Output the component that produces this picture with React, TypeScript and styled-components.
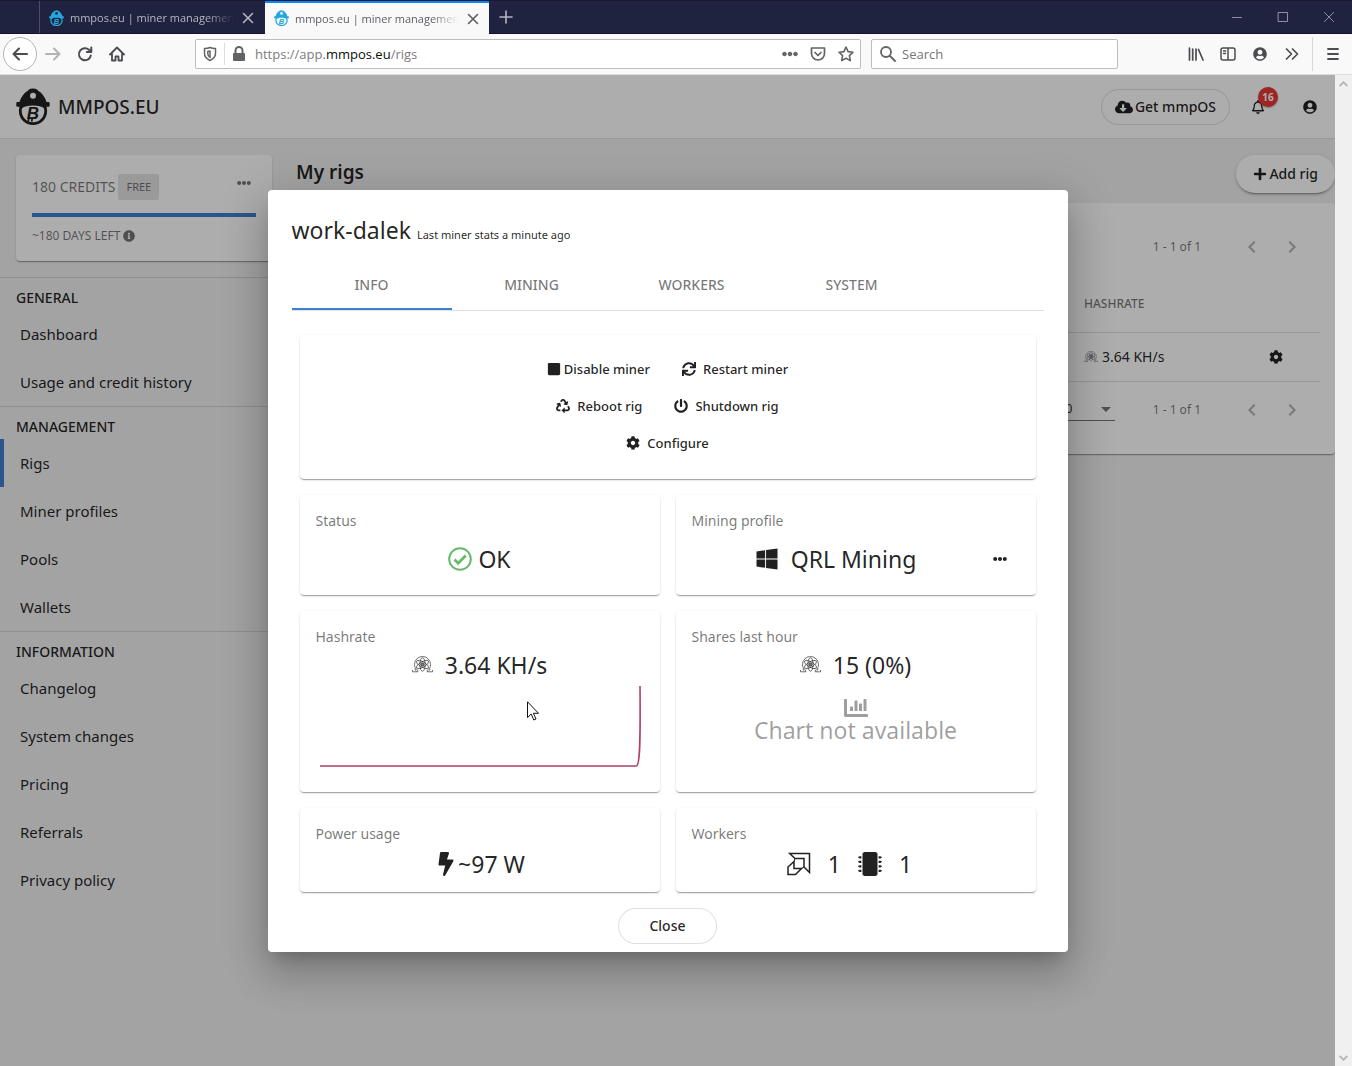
import React from 'react';
import styled, { createGlobalStyle } from 'styled-components';
import {
  FaBolt,
  FaChartBar,
  FaCloudDownloadAlt,
  FaCog,
  FaEllipsisH,
  FaInfoCircle,
  FaMicrochip,
  FaPlus,
  FaPowerOff,
  FaRecycle,
  FaRegBell,
  FaStop,
  FaSync,
  FaUserCircle,
  FaWindows,
} from 'react-icons/fa';

const ink = 'rgba(0, 0, 0, 0.87)';
const muted = 'rgba(0, 0, 0, 0.54)';
const line = 'rgba(0, 0, 0, 0.12)';
const blue = '#3f7fd0';
const raised =
  '0 2px 1px -1px rgba(0,0,0,.2), 0 1px 1px 0 rgba(0,0,0,.14), 0 1px 3px 0 rgba(0,0,0,.12)';

const GlobalStyle = createGlobalStyle`
  *, *::before, *::after { box-sizing: border-box; }
  html, body, #root { height: 100%; }
  body { margin: 0; overflow: hidden; font-family: "Noto Sans", "Open Sans", sans-serif; color: ${ink}; }
  button, input, select { font: inherit; color: inherit; }
  button { border: 0; padding: 0; background: none; cursor: pointer; }
  h1, h2, h3, p, ul { margin: 0; padding: 0; }
  ul { list-style: none; }
  a { color: inherit; text-decoration: none; }
  svg { display: block; flex: none; }
`;

/* ---------- browser window ---------- */

const Window = styled.div`
  display: flex;
  flex-direction: column;
  height: 100vh;
`;

const TabStrip = styled.div`
  display: flex;
  height: 34px;
  flex: none;
  background: #202340;
  border-top: 1px solid #17192e;
  border-bottom: 1px solid #17122c;
  font: 11px/18px "Open Sans", sans-serif;
  color: #b4b5c4;
`;

const TabStub = styled.div`
  width: 40px;
  border-right: 1px solid #4c4e65;
`;

const BrowserTab = styled.div<{ $active?: boolean }>`
  display: flex;
  align-items: center;
  gap: 6px;
  width: ${(p) => (p.$active ? 224 : 225)}px;
  padding: 0 9px;
  margin-bottom: ${(p) => (p.$active ? -1 : 0)}px;
  border-top: 2px solid ${(p) => (p.$active ? '#0a84ff' : 'transparent')};
  background: ${(p) => (p.$active ? '#f9f9fa' : 'transparent')};
  color: ${(p) => (p.$active ? '#5d5d62' : '#b4b5c4')};
`;

const TabTitle = styled.span`
  flex: 1;
  white-space: nowrap;
  mask-image: linear-gradient(to right, #000 calc(100% - 28px), transparent);
`;

const StripButton = styled.button`
  display: grid;
  place-items: center;
  width: 34px;
`;

const WindowButtons = styled.div`
  display: flex;
  margin-left: auto;
`;

const WindowButton = styled.button`
  display: grid;
  place-items: center;
  width: 46px;
  color: #8f90a3;
`;

const Toolbar = styled.div`
  display: flex;
  align-items: center;
  flex: none;
  height: 41px;
  padding-left: 3px;
  background: #f9f9fa;
  border-bottom: 1px solid #ddd;
  color: #4c4c50;
`;

const ToolButton = styled.button<{ $dim?: boolean }>`
  display: grid;
  place-items: center;
  width: 32px;
  height: 32px;
  color: #4c4c50;
  opacity: ${(p) => (p.$dim ? 0.4 : 1)};
`;

const BackButton = styled(ToolButton)`
  width: 34px;
  height: 34px;
  border: 1px solid #b5b5b8;
  border-radius: 50%;
  background: #fff;
`;

const Field = styled.div<{ $grow?: boolean }>`
  display: flex;
  align-items: center;
  height: 30px;
  ${(p) => (p.$grow ? 'flex: 1;' : 'width: 247px;')}
  border: 1px solid #bcbcbe;
  border-radius: 2px;
  background: #fff;
  color: #636367;
  font: 13px/20px "Open Sans", sans-serif;
`;

const AddressField = styled(Field)`
  margin: 0 10px 0 62px;
  padding: 0 0 0 6px;
`;

const SearchField = styled(Field)`
  padding: 0 8px;
  gap: 6px;
  margin-right: 62px;
`;

const FieldRule = styled.span`
  width: 1px;
  height: 22px;
  margin: 0 6px;
  background: #ddd;
`;

const Address = styled.a`
  flex: 1;
  margin-left: 8px;
  color: #7c7c80;
  b { font-weight: 400; color: #0c0c0d; }
`;

const FieldButton = styled(ToolButton)`
  width: 28px;
  height: 28px;
  color: #636367;
`;

const SearchInput = styled.input`
  flex: 1;
  min-width: 0;
  border: 0;
  outline: 0;
  padding: 0;
  background: none;
  &::placeholder { color: #757579; opacity: 1; }
`;

const ToolRule = styled.span`
  width: 1px;
  height: 34px;
  margin-left: 4px;
  background: #d8d8da;
`;

const MenuButton = styled(ToolButton)`
  width: 39px;
`;

const Viewport = styled.div`
  display: flex;
  flex: 1;
  min-height: 0;
`;

const ScrollTrack = styled.div`
  display: flex;
  flex-direction: column;
  justify-content: space-between;
  align-items: center;
  width: 17px;
  padding: 6px 0 5px;
  background: #f0f0f0;
`;

/* ---------- application page ---------- */

const Page = styled.div`
  position: relative;
  display: flex;
  flex-direction: column;
  flex: 1;
  min-width: 0;
  overflow: hidden;
  background: #f1f1f1;
`;

const Header = styled.header`
  display: flex;
  align-items: center;
  gap: 4px;
  height: 64px;
  flex: none;
  padding: 0 1px 0 16px;
  background: #fff;
  border-bottom: 1px solid #e0e0e0;
`;

const Brand = styled.a`
  display: flex;
  align-items: center;
  gap: 8px;
  margin-right: auto;
  font-size: 19px;
  line-height: 28px;
  font-weight: 500;
`;

const Pill = styled.button<{ $raised?: boolean; $pad?: number }>`
  display: flex;
  align-items: center;
  justify-content: center;
  gap: 2px;
  height: ${(p) => (p.$raised ? 38 : 36)}px;
  padding: 0 ${(p) => p.$pad ?? 13}px;
  border: ${(p) => (p.$raised ? '0' : `1px solid ${line}`)};
  border-radius: 19px;
  background: #fff;
  box-shadow: ${(p) =>
    p.$raised
      ? '0 3px 1px -2px rgba(0,0,0,.2), 0 2px 2px 0 rgba(0,0,0,.14), 0 1px 5px 0 rgba(0,0,0,.12)'
      : 'none'};
  font-size: 14px;
  line-height: 20px;
  font-weight: 500;
  white-space: nowrap;
`;

const RoundButton = styled.button<{ $size?: number }>`
  position: relative;
  display: grid;
  place-items: center;
  width: ${(p) => p.$size ?? 40}px;
  height: ${(p) => p.$size ?? 40}px;
`;

const Badge = styled.span`
  position: absolute;
  top: 4px;
  right: 4px;
  width: 20px;
  height: 20px;
  border-radius: 50%;
  background: #e53935;
  box-shadow: 0 1px 2px rgba(0, 0, 0, 0.3);
  color: #fff;
  font-size: 10px;
  line-height: 20px;
  font-weight: 700;
  text-align: center;
`;

const Body = styled.div`
  display: flex;
  flex: 1;
  min-height: 0;
`;

const Sidebar = styled.aside`
  width: 280px;
  flex: none;
  padding-top: 16px;
`;

const CreditCard = styled.section`
  margin: 0 8px 16px 16px;
  padding: 16px;
  border-radius: 4px;
  background: #fff;
  box-shadow: ${raised};
  color: ${muted};
`;

const CreditRow = styled.div`
  display: flex;
  align-items: center;
  gap: 3px;
  height: 32px;
  margin-bottom: 10px;
  font-size: 14px;
  line-height: 20px;
`;

const CreditMenu = styled(RoundButton)`
  align-self: flex-start;
`;

const Plan = styled.span`
  margin-right: auto;
  padding: 4px 8px;
  border-radius: 2px;
  background: #e4e4e4;
  font-size: 11px;
  line-height: 18px;
`;

const CreditBar = styled.progress`
  display: block;
  width: 100%;
  height: 4px;
  margin-bottom: 10px;
  appearance: none;
  border: 0;
  &::-webkit-progress-bar { background: #d5e2f4; }
  &::-webkit-progress-value { background: ${blue}; }
`;

const CreditNote = styled.p`
  display: flex;
  align-items: center;
  gap: 3px;
  font-size: 12px;
  line-height: 18px;
`;

const NavGroup = styled.nav`
  border-top: 1px solid ${line};
`;

const NavHeading = styled.h3`
  height: 32px;
  padding: 10px 16px 0;
  font-size: 14px;
  line-height: 20px;
  font-weight: 500;
`;

const NavLink = styled.a<{ $active?: boolean }>`
  display: block;
  padding: 12px 16px;
  border-left: 4px solid ${(p) => (p.$active ? blue : 'transparent')};
  font-size: 15px;
  line-height: 24px;
`;

const Main = styled.main`
  flex: 1;
  min-width: 0;
  padding: 16px 0 0 16px;
`;

const MainHead = styled.div`
  display: flex;
  align-items: center;
  justify-content: space-between;
  margin-bottom: 10px;
`;

const MainTitle = styled.h1`
  font-size: 19px;
  line-height: 28px;
  font-weight: 600;
  padding-bottom: 4px;
`;

const RigsCard = styled.section`
  padding: 16px 15px 16px 16px;
  border-radius: 4px;
  background: #fff;
  box-shadow: ${raised};
`;

const Paginator = styled.div`
  display: flex;
  align-items: center;
  justify-content: flex-end;
  height: 56px;
  padding-right: 8px;
  color: ${muted};
  font-size: 12px;
  line-height: 18px;
`;

const PageRange = styled.span`
  margin: 0 31px 0 38px;
`;

const SizeBox = styled.label`
  display: flex;
  align-items: center;
  width: 56px;
  height: 22px;
  border-bottom: 1px solid ${muted};
  color: ${ink};
  svg { margin-right: 4px; color: ${muted}; }
`;

const SizeSelect = styled.select`
  flex: 1;
  min-width: 0;
  appearance: none;
  border: 0;
  padding: 0;
  background: none;
`;

const RigTable = styled.table`
  width: 100%;
  border-collapse: collapse;
  table-layout: fixed;
  font-size: 14px;
  th {
    height: 57px;
    padding: 0;
    border-bottom: 1px solid ${line};
    color: ${muted};
    font-size: 12px;
    font-weight: 500;
    text-align: left;
  }
  td { height: 49px; padding: 0; border-bottom: 1px solid ${line}; }
  th:nth-child(2) { width: 156px; }
  th:nth-child(3) { width: 80px; }
`;

const CellRow = styled.span`
  display: flex;
  align-items: center;
  gap: 4px;
`;

const CellEnd = styled.span`
  display: flex;
  justify-content: flex-end;
  padding-right: 24px;
`;

/* ---------- dialog ---------- */

const Backdrop = styled.div`
  position: absolute;
  inset: 0;
  display: grid;
  place-items: center;
  background: rgba(0, 0, 0, 0.32);
`;

const Dialog = styled.div`
  display: flex;
  flex-direction: column;
  width: 800px;
  max-width: 92%;
  padding: 24px 24px 8px;
  border-radius: 4px;
  background: #fff;
  box-shadow: 0 11px 15px -7px rgba(0, 0, 0, 0.2), 0 24px 38px 3px rgba(0, 0, 0, 0.14),
    0 9px 46px 8px rgba(0, 0, 0, 0.12);
`;

const DialogTitle = styled.h2`
  display: flex;
  align-items: baseline;
  gap: 6px;
  margin-bottom: 11px;
  font-size: 23px;
  line-height: 32px;
  font-weight: 400;
  small { font-size: 11px; }
`;

const Tabs = styled.div`
  display: flex;
  border-bottom: 1px solid ${line};
`;

const Tab = styled.button<{ $active?: boolean }>`
  width: 160px;
  height: 48px;
  border-bottom: 2px solid ${(p) => (p.$active ? blue : 'transparent')};
  color: ${muted};
  font-size: 14px;
  line-height: 20px;
  font-weight: 500;
`;

const Grid = styled.div`
  display: grid;
  grid-template-columns: 1fr 1fr;
  gap: 16px;
  padding: 24px 8px 16px;
`;

const Card = styled.section<{ $full?: boolean; $bottom?: number }>`
  grid-column: ${(p) => (p.$full ? '1 / -1' : 'auto')};
  padding: 16px 16px ${(p) => p.$bottom ?? 16}px;
  border-radius: 4px;
  background: #fff;
  box-shadow: ${raised};
`;

const Actions = styled.div`
  display: flex;
  justify-content: center;
  height: 37px;
`;

const Action = styled.button<{ $tight?: boolean }>`
  display: flex;
  align-items: center;
  gap: ${(p) => (p.$tight ? 3 : 7)}px;
  padding: 0 16px;
  font-size: 13px;
  line-height: 20px;
  font-weight: 500;
`;

const CardLabel = styled.h3`
  color: ${muted};
  font-size: 14px;
  line-height: 20px;
  font-weight: 400;
`;

const Value = styled.div<{ $top: number; $gap?: number }>`
  display: flex;
  align-items: center;
  justify-content: center;
  gap: ${(p) => p.$gap ?? 6}px;
  height: 32px;
  margin-top: ${(p) => p.$top}px;
  font-size: 23px;
  line-height: 32px;
`;

const ValueSplit = styled.div`
  display: grid;
  grid-template-columns: 1fr 40px;
`;

const MenuSlot = styled.div`
  display: grid;
  place-items: center;
  padding-top: 12px;
`;

const Missing = styled.div`
  display: flex;
  flex-direction: column;
  align-items: center;
  padding-top: 15px;
  color: rgba(0, 0, 0, 0.38);
  font-size: 23px;
  line-height: 20px;
`;

const WorkerValue = styled(Value)`
  padding-right: 12px;
`;

const Spark = styled.svg`
  width: 100%;
  height: 95px;
`;

const CloseButton = styled(Pill)`
  align-self: center;
`;

const Pointer = styled.svg`
  position: absolute;
  left: 527px;
  top: 626px;
`;

/* ---------- drawings ---------- */

const MinerLogo = ({ size, color, hole }: { size: number; color: string; hole: string }) => (
  <svg width={size} height={(size * 38) / 34} viewBox="0 0 34 38" aria-hidden="true">
    <circle cx="17" cy="23" r="12.700" fill="none" stroke={color} strokeWidth="2.800" />
    <path d="M3.500 14C5 9 8 5 11.500 3L13 1.500Q14 .6 17 .6T21 1.500L22.500 3C26 5 29 9 30.500 14H32.500q1.200 0 1.200 1.200v2.300q0 1.200-1.200 1.200H30L28 20.200C26 18.500 22 17.500 17 17.500S8 18.500 6 20.200L4 18.700H1.500Q.3 18.700 .3 17.500V15.200Q.3 14 1.500 14z" fill={color} />
    <circle cx="17" cy="7.800" r="3" fill={hole} />
    <path d="M12.800 30.500l-.7 3M16.300 30.500l-.7 3" stroke={color} strokeWidth="1.700" />
    <text x="17" y="31" textAnchor="middle" fontFamily="Liberation Sans, sans-serif" fontWeight="700" fontStyle="italic" fontSize="17" fill={color}>B</text>
  </svg>
);

const QrlIcon = ({ width, stroke = '#333' }: { width: number; stroke?: string }) => (
  <svg width={width} height={(width * 17) / 21} viewBox="0 0 21 17" fill="none" stroke={stroke} strokeWidth="0.7" aria-hidden="true">
    <path d="M.5 14v1.800h5.300v-1.500C3.500 12.800 2.500 11 2.500 8.500a8 8 0 0 1 16 0c0 2.500-1 4.300-3.300 5.800v1.500h5.300V14" />
    <path d="M3 12.500q0 2 1.500 2.500M18 12.500q0 2-1.500 2.500" />
    <ellipse cx="10.500" cy="8.500" rx="2.700" ry="6.700" />
    <ellipse cx="10.500" cy="8.500" rx="2.700" ry="6.700" transform="rotate(60 10.500 8.500)" />
    <ellipse cx="10.500" cy="8.500" rx="2.700" ry="6.700" transform="rotate(-60 10.500 8.500)" />
    <circle cx="10.500" cy="8.500" r="1.700" fill="#777" />
  </svg>
);

const AmdIcon = () => (
  <svg width="24" height="24" viewBox="0 0 24 24" fill="none" stroke="#212121" strokeWidth="1.500" aria-hidden="true">
    <path d="M2.700 1.500H22.500V20.500L17 15V6.500H8Z" />
    <path d="M7 9.500L1 15V22.500H8.500L14.500 16.500H7Z" />
    <path d="M8 6.500L7 9.500M17 15L14.500 16.500" strokeWidth="1" />
  </svg>
);

const Stroke = ({ d, size = 16, w = 2 }: { d: string; size?: number; w?: number }) => (
  <svg width={size} height={size} viewBox="0 0 16 16" fill="none" stroke="currentColor" strokeWidth={w} strokeLinecap="round" strokeLinejoin="round" aria-hidden="true">
    <path d={d} />
  </svg>
);

const Chevron = ({ d }: { d: string }) => (
  <svg width="24" height="24" viewBox="0 0 24 24" fill="rgba(0,0,0,.3)" aria-hidden="true">
    <path d={d} />
  </svg>
);

const Caret = () => (
  <svg width="10" height="5" viewBox="0 0 10 5" fill="currentColor" aria-hidden="true">
    <path d="M0 0h10L5 5z" />
  </svg>
);

/* ---------- composition ---------- */

const navigation = [
  { title: 'GENERAL', links: ['Dashboard', 'Usage and credit history'] },
  { title: 'MANAGEMENT', links: ['Rigs', 'Miner profiles', 'Pools', 'Wallets'] },
  { title: 'INFORMATION', links: ['Changelog', 'System changes', 'Pricing', 'Referrals', 'Privacy policy'] },
];

const Pages = ({ children }: { children?: React.ReactNode }) => (
  <Paginator>
    {children}
    <PageRange>1 - 1 of 1</PageRange>
    <RoundButton aria-label="Previous page"><Chevron d="M15.410 7.410L14 6l-6 6 6 6 1.410-1.410L10.830 12z" /></RoundButton>
    <RoundButton aria-label="Next page"><Chevron d="M10 6L8.590 7.410 13.170 12l-4.580 4.590L10 18l6-6z" /></RoundButton>
  </Paginator>
);

const BrowserChrome = () => (
  <>
    <TabStrip>
      <TabStub />
      {[false, true].map((active) => (
        <BrowserTab key={String(active)} $active={active}>
          <MinerLogo size={15} color="#23a9dc" hole={active ? '#fff' : '#202340'} />
          <TabTitle>mmpos.eu | miner managemen</TabTitle>
          <button aria-label="Close tab"><Stroke d="M3.500 3.500l9 9M12.500 3.500l-9 9" w={1.6} /></button>
        </BrowserTab>
      ))}
      <StripButton aria-label="New tab"><Stroke d="M8 2v12M2 8h12" w={1.6} /></StripButton>
      <WindowButtons>
        <WindowButton aria-label="Minimize"><Stroke d="M3.500 8.500h9" w={1} /></WindowButton>
        <WindowButton aria-label="Maximize"><Stroke d="M3.500 3.500h9v9h-9z" w={1} /></WindowButton>
        <WindowButton aria-label="Close window"><Stroke d="M3.500 3.500l9 9M12.500 3.500l-9 9" w={1} /></WindowButton>
      </WindowButtons>
    </TabStrip>
    <Toolbar>
      <BackButton aria-label="Back"><Stroke d="M15 8H1.500M7 2.500L1.500 8 7 13.500" /></BackButton>
      <ToolButton aria-label="Forward" $dim><Stroke d="M1 8h13.500M9 2.500L14.500 8 9 13.500" /></ToolButton>
      <ToolButton aria-label="Reload"><Stroke d="M13.800 9.500A6 6 0 1 1 12 3.800L14 5.500M14.300 1.500V6H9.800" /></ToolButton>
      <ToolButton aria-label="Home"><Stroke d="M1 8.500L8 1.500l7 7M3 8v6.500h3.500V10.500h3v4H13V8" w={1.8} /></ToolButton>
      <AddressField $grow>
        <Stroke d="M8 1.500C6 2.500 4.500 2.500 2.500 2.500v5c0 3.500 2.500 5.500 5.500 7 3-1.500 5.500-3.500 5.500-7v-5c-2 0-3.500 0-5.500-1zM8 5v6.500C6.500 10.500 5.800 9.500 5.800 7.500V5.500z" w={1.5} />
        <FieldRule />
        <svg width="16" height="16" viewBox="0 0 16 16" aria-hidden="true">
          <path d="M4.500 8V4.500a3.500 3.500 0 0 1 7 0V8" fill="none" stroke="currentColor" strokeWidth="2" />
          <rect x="2" y="7" width="12" height="8" rx="1" fill="currentColor" />
        </svg>
        <Address href="#">https://app.<b>mmpos.eu</b>/rigs</Address>
        <FieldButton aria-label="Page actions"><FaEllipsisH size={16} /></FieldButton>
        <FieldButton aria-label="Save to Pocket"><Stroke d="M1.500 2h13v5.500a6.500 6.500 0 0 1-13 0zM5 6.500l3 3 3-3" w={1.7} /></FieldButton>
        <FieldButton aria-label="Bookmark"><Stroke d="M8 1l2.100 4.600 4.900.6-3.600 3.400.9 5L8 12.200l-4.300 2.400.9-5L1 6.200l4.900-.6z" w={1.6} /></FieldButton>
      </AddressField>
      <SearchField>
        <Stroke d="M11 6A5 5 0 1 1 1 6a5 5 0 0 1 10 0zM10 10l5 5" w={1.8} />
        <SearchInput aria-label="Search" placeholder="Search" />
      </SearchField>
      <ToolButton aria-label="Library"><Stroke d="M1.500 2v12M4.700 3v11M8 3v11M10.500 3.500L15 14" w={1.7} /></ToolButton>
      <ToolButton aria-label="Sidebars"><Stroke d="M3 2h10a2 2 0 0 1 2 2v8a2 2 0 0 1-2 2H3a2 2 0 0 1-2-2V4a2 2 0 0 1 2-2zM8 2v12M3.500 5h2M3.500 7.500h2" w={1.5} /></ToolButton>
      <ToolButton aria-label="Account"><FaUserCircle size={14} /></ToolButton>
      <ToolButton aria-label="More tools"><Stroke d="M2.500 3l5 5-5 5M8.500 3l5 5-5 5" w={1.7} /></ToolButton>
      <ToolRule />
      <MenuButton aria-label="Menu"><Stroke d="M3 3h10M3 8h10M3 13h10" w={1.8} /></MenuButton>
    </Toolbar>
  </>
);

const RigDialog = () => (
  <Dialog role="dialog" aria-labelledby="rig-name">
    <DialogTitle id="rig-name">work-dalek <small>Last miner stats a minute ago</small></DialogTitle>
    <Tabs role="tablist">
      {['INFO', 'MINING', 'WORKERS', 'SYSTEM'].map((t, i) => (
        <Tab key={t} role="tab" aria-selected={i === 0} $active={i === 0}>{t}</Tab>
      ))}
    </Tabs>
    <Grid>
      <Card $full $bottom={17}>
        <Actions>
          <Action $tight><FaStop size={14} />Disable miner</Action>
          <Action><FaSync size={14} />Restart miner</Action>
        </Actions>
        <Actions>
          <Action><FaRecycle size={14} />Reboot rig</Action>
          <Action><FaPowerOff size={14} />Shutdown rig</Action>
        </Actions>
        <Actions>
          <Action><FaCog size={14} />Configure</Action>
        </Actions>
      </Card>
      <Card $bottom={20}>
        <CardLabel>Status</CardLabel>
        <Value $top={12}>
          <svg width="24" height="24" viewBox="0 0 24 24" fill="none" stroke="#66bb6a" aria-hidden="true">
            <circle cx="12" cy="12" r="10.800" strokeWidth="2" />
            <path d="M6.500 12.500l3.700 3.700 7.500-7.700" strokeWidth="2.800" />
          </svg>
          OK
        </Value>
      </Card>
      <Card $bottom={20}>
        <CardLabel>Mining profile</CardLabel>
        <ValueSplit>
          <Value $top={12} $gap={12}><FaWindows size={24} />QRL Mining</Value>
          <MenuSlot><RoundButton $size={32} aria-label="Profile menu"><FaEllipsisH size={14} /></RoundButton></MenuSlot>
        </ValueSplit>
      </Card>
      <Card>
        <CardLabel>Hashrate</CardLabel>
        <Value $top={2} $gap={12}><QrlIcon width={21} />3.64 KH/s</Value>
        <Spark viewBox="0 0 328 95" preserveAspectRatio="none" fill="none" stroke="#b0416a" strokeWidth="1.600" aria-label="Hashrate chart">
          <path d="M4 85H320.500C324 84 324.500 60 324 5" />
        </Spark>
      </Card>
      <Card>
        <CardLabel>Shares last hour</CardLabel>
        <Value $top={2} $gap={12}><QrlIcon width={21} />15 (0%)</Value>
        <Missing><FaChartBar size={24} />Chart not available</Missing>
      </Card>
      <Card $bottom={12}>
        <CardLabel>Power usage</CardLabel>
        <Value $top={4} $gap={0}><FaBolt size={24} />~97 W</Value>
      </Card>
      <Card $bottom={12}>
        <CardLabel>Workers</CardLabel>
        <WorkerValue $top={4} $gap={17}><AmdIcon />1<FaMicrochip size={24} />1</WorkerValue>
      </Card>
    </Grid>
    <CloseButton $pad={30}>Close</CloseButton>
  </Dialog>
);

export default function App() {
  return (
    <Window>
      <GlobalStyle />
      <BrowserChrome />
      <Viewport>
        <Page>
          <Header>
            <Brand href="#"><MinerLogo size={34} color="#212121" hole="#fff" />MMPOS.EU</Brand>
            <Pill><FaCloudDownloadAlt size={18} />Get mmpOS</Pill>
            <RoundButton $size={48} aria-label="Notifications"><FaRegBell size={14} /><Badge>16</Badge></RoundButton>
            <RoundButton $size={48} aria-label="Account"><FaUserCircle size={14} /></RoundButton>
          </Header>
          <Body>
            <Sidebar>
              <CreditCard>
                <CreditRow>
                  180 CREDITS <Plan>FREE</Plan>
                  <CreditMenu $size={24} aria-label="Credit menu"><FaEllipsisH size={14} /></CreditMenu>
                </CreditRow>
                <CreditBar value={180} max={180} aria-label="Credits left" />
                <CreditNote>~180 DAYS LEFT <FaInfoCircle size={12} /></CreditNote>
              </CreditCard>
              {navigation.map((group) => (
                <NavGroup key={group.title} aria-label={group.title}>
                  <NavHeading>{group.title}</NavHeading>
                  <ul>
                    {group.links.map((l) => (
                      <li key={l}><NavLink href="#" $active={l === 'Rigs'}>{l}</NavLink></li>
                    ))}
                  </ul>
                </NavGroup>
              ))}
            </Sidebar>
            <Main>
              <MainHead>
                <MainTitle>My rigs</MainTitle>
                <Pill $raised $pad={17}><FaPlus size={14} />Add rig</Pill>
              </MainHead>
              <RigsCard>
                <Pages />
                <RigTable>
                  <thead>
                    <tr><th scope="col" aria-label="Name" /><th scope="col">HASHRATE</th><th scope="col" aria-label="Settings" /></tr>
                  </thead>
                  <tbody>
                    <tr>
                      <td />
                      <td><CellRow><QrlIcon width={14} stroke="#666" />3.64 KH/s</CellRow></td>
                      <td><CellEnd><RoundButton aria-label="Rig settings"><FaCog size={14} /></RoundButton></CellEnd></td>
                    </tr>
                  </tbody>
                </RigTable>
                <Pages>
                  <SizeBox>
                    <SizeSelect aria-label="Rows per page" defaultValue="10"><option>10</option></SizeSelect>
                    <Caret />
                  </SizeBox>
                </Pages>
              </RigsCard>
            </Main>
          </Body>
          <Backdrop><RigDialog /></Backdrop>
          <Pointer width="12" height="20" viewBox="0 0 12 20" fill="#fff" stroke="#111" strokeWidth="1" aria-hidden="true">
            <path d="M.5 .8V16.500L4.200 13l2.600 6 2.200-1-2.600-5.700h5.100z" />
          </Pointer>
        </Page>
        <ScrollTrack aria-hidden="true">
          <svg width="9" height="6" viewBox="0 0 9 6" fill="none" stroke="#b5b5b5" strokeWidth="1.800"><path d="M.7 5L4.500 1.200 8.300 5" /></svg>
          <svg width="9" height="6" viewBox="0 0 9 6" fill="none" stroke="#b5b5b5" strokeWidth="1.800"><path d="M.7 1L4.500 4.800 8.300 1" /></svg>
        </ScrollTrack>
      </Viewport>
    </Window>
  );
}
